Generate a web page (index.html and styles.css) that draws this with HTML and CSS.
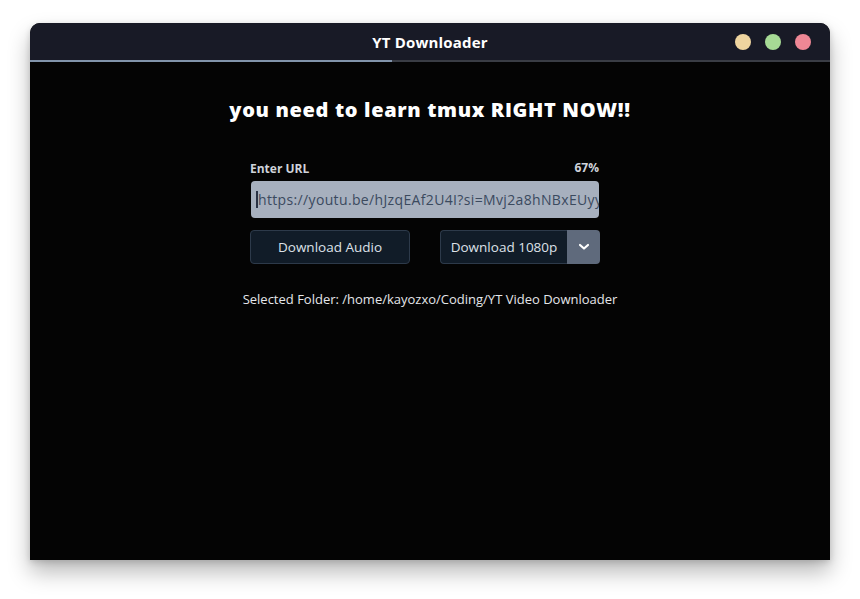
FILE: index.html
```html
<!DOCTYPE html>
<html>
<head>
<meta charset="utf-8">
<link rel="stylesheet" href="styles.css">
</head>
<body>
<div class="window">
  <div class="titlebar">
    <div class="title">YT Downloader</div>
    <div class="dots">
      <span class="dot yellow"></span>
      <span class="dot green"></span>
      <span class="dot red"></span>
    </div>
    <div class="progress"><div class="progress-fill" style="width:45.25%"></div></div>
  </div>
  <div class="content">
    <h1 class="heading">you need to learn tmux RIGHT NOW!!</h1>
    <div class="form">
      <div class="label-row">
        <span class="label">Enter URL</span>
        <span class="percent">67%</span>
      </div>
      <div class="input"><span class="caret"></span>https://youtu.be/hJzqEAf2U4I?si=Mvj2a8hNBxEUyy</div>
      <div class="buttons">
        <button class="btn">Download Audio</button>
        <div class="split">
          <button class="btn split-main">Download 1080p</button>
          <button class="split-arrow">
            <svg width="12" height="8" viewBox="0 0 12 8"><path d="M2 2 L6 5.5 L10 2" fill="none" stroke="#fff" stroke-width="2.2" stroke-linecap="round" stroke-linejoin="round"/></svg>
          </button>
        </div>
      </div>
    </div>
    <div class="folder">Selected Folder: /home/kayozxo/Coding/YT Video Downloader</div>
  </div>
</div>
</body>
</html>
```
FILE: styles.css
```css
* { box-sizing: border-box; }
html, body { margin: 0; padding: 0; background: #ffffff; }
body {
  font-family: "Open Sans", "DejaVu Sans", sans-serif;
  padding: 23px 30px 0 30px;
  height: 599px;
  overflow: hidden;
}
.window {
  width: 800px;
  height: 537px;
  border-radius: 10px 10px 0 0;
  background: #040404;
  overflow: hidden;
  display: flex;
  flex-direction: column;
  box-shadow: 0 12px 22px rgba(0,0,0,0.28), 0 2px 6px rgba(0,0,0,0.15);
}
.titlebar {
  height: 39px;
  background: #181a26;
  position: relative;
  display: flex;
  align-items: center;
  justify-content: center;
  flex-shrink: 0;
}
.title {
  color: #ffffff;
  font-weight: 700;
  font-size: 15px;
  letter-spacing: 0.2px;
  margin-top: -1px;
}
.dots {
  position: absolute;
  right: 19px;
  top: 11px;
  display: flex;
  gap: 14px;
}
.dot { width: 16px; height: 16px; border-radius: 50%; display: block; }
.yellow { background: #eed49f; }
.green { background: #a6da95; }
.red { background: #ee8795; }
.progress {
  position: absolute;
  left: 0; right: 0; bottom: 0;
  height: 2px;
  background: #3a3d45;
}
.progress-fill { height: 100%; background: #8294ab; }
.content {
  flex: 1;
  display: flex;
  flex-direction: column;
  align-items: center;
}
.heading {
  margin: 36px 0 0 0;
  color: #ffffff;
  font-size: 20px;
  font-weight: 800;
  letter-spacing: 0.65px;
  line-height: 24px;
}
.form {
  width: 350px;
  margin-top: 33px;
  margin-right: 10px;
}
.label-row {
  display: flex;
  justify-content: space-between;
  align-items: flex-end;
  padding: 0 1px 0 0;
  height: 18px;
}
.label {
  color: #cfd3da;
  font-size: 12px;
  font-weight: 700;
  line-height: 14px;
  margin-bottom: -3px;
}
.percent {
  color: #cfd3da;
  font-size: 12px;
  font-weight: 700;
  line-height: 14px;
  margin-bottom: -2px;
}
.input {
  margin-top: 8px;
  margin-left: 1px;
  height: 37px;
  width: 348px;
  background: #a7b0be;
  border-radius: 4px;
  color: #3b4a5e;
  font-size: 14px;
  display: flex;
  align-items: center;
  padding-left: 5px;
  white-space: nowrap;
  overflow: hidden;
  letter-spacing: 0.35px;
}
.caret {
  display: inline-block;
  width: 2px;
  height: 17px;
  background: #2a3244;
  margin-right: 0px;
  flex-shrink: 0;
}
.buttons {
  margin-top: 12px;
  display: flex;
  justify-content: space-between;
}
.btn {
  font-family: inherit;
  height: 34px;
  background: #111c28;
  color: #dde1e8;
  font-size: 13.5px;
  border: 1px solid #2d3a4a;
  border-radius: 4px;
  padding: 0;
  width: 160px;
}
.split { display: flex; width: 160px; }
.split-main {
  width: 127px;
  border-radius: 4px 0 0 4px;
  border-right: none;
}
.split-arrow {
  width: 33px;
  height: 34px;
  background: #5f6a7c;
  border: none;
  border-radius: 0 4px 4px 0;
  display: flex;
  align-items: center;
  justify-content: center;
  padding: 0;
}
.folder {
  margin-top: 26px;
  color: #e4e6ea;
  font-size: 13px;
}
```
